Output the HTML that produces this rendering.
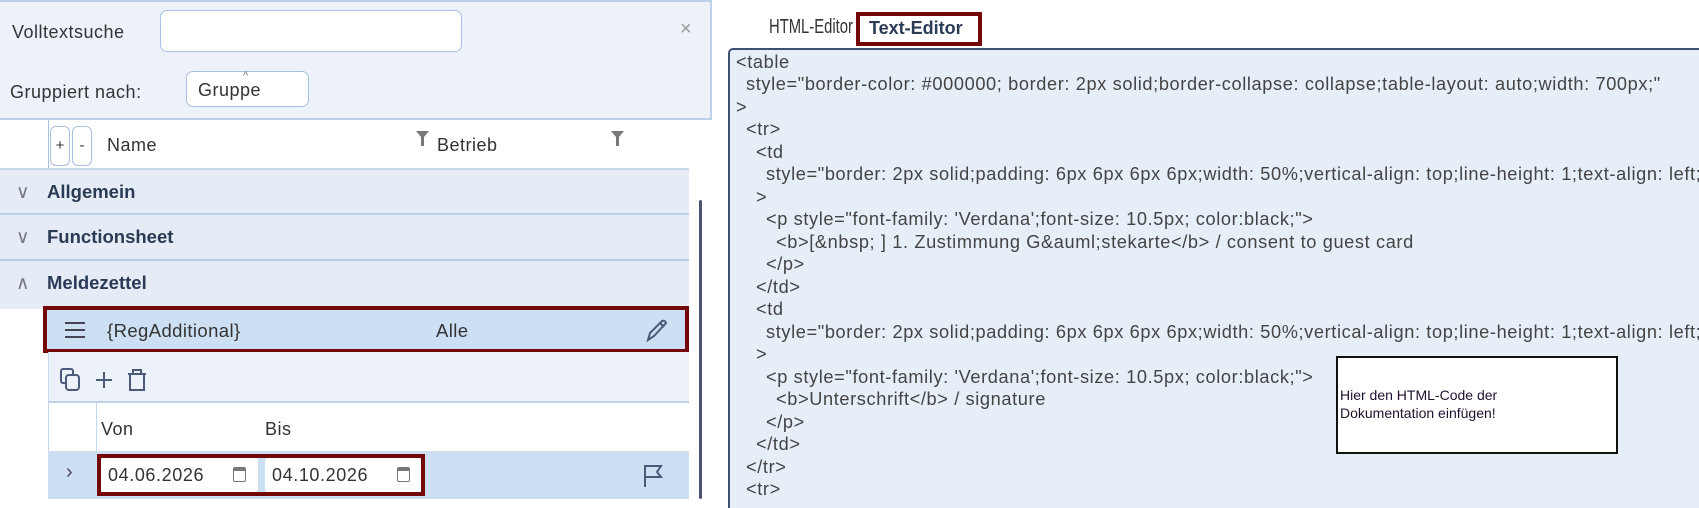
<!DOCTYPE html>
<html><head><meta charset="utf-8"><style>
*{box-sizing:border-box;margin:0;padding:0}
body{width:1699px;height:499px;overflow:hidden;background:#fff;font-family:"Liberation Sans",sans-serif;position:relative;color:#2b3a55}
.abs{position:absolute}
.top{left:0;top:0;width:712px;height:120px;background:#edf2fa;border-right:2px solid #bcd0ea;border-bottom:2px solid #bcd0ea;border-top:2px solid #bcd0ea}
.lbl{font-size:18px;color:#333;letter-spacing:0.5px}
.inp{background:#fff;border:1px solid #aac0e0;border-radius:7px}
.grp{left:0;width:689px;background:#e6ecf5;border-bottom:2px solid #b9cde6;font-weight:bold;font-size:18.5px;color:#2b3a55}
.grp span{position:absolute;left:47px}
.grp i{position:absolute;left:16px;font-style:normal;color:#778;font-weight:normal}
.code{left:728px;top:48px;width:980px;height:460px;background:#e6eef8;border:2px solid #3c5070;border-right:none;border-bottom:none;border-top-left-radius:5px}
.ln{position:absolute;font-size:18.2px;color:#444;white-space:pre;letter-spacing:0.62px}
</style></head><body>
<div class="abs top"></div>
<div class="abs lbl" style="left:12px;top:22px">Volltextsuche</div>
<div class="abs inp" style="left:160px;top:10px;width:302px;height:42px"></div>
<div class="abs" style="left:680px;top:18px;font-size:20px;color:#999">×</div>
<div class="abs lbl" style="left:10px;top:82px">Gruppiert nach:</div>
<div class="abs inp" style="left:186px;top:71px;width:123px;height:36px"></div>
<div class="abs lbl" style="left:198px;top:80px">Gruppe</div>
<div class="abs" style="left:243px;top:70px;font-size:11px;color:#777">^</div>
<!-- header -->
<div class="abs" style="left:48px;top:120px;width:1px;height:50px;background:#aac0e0"></div>
<div class="abs inp" style="left:50px;top:126px;width:20px;height:40px;border-radius:6px;font-size:15px;text-align:center;line-height:38px;color:#333">+</div>
<div class="abs inp" style="left:72px;top:126px;width:20px;height:40px;border-radius:6px;font-size:15px;text-align:center;line-height:38px;color:#333">-</div>
<div class="abs lbl" style="left:107px;top:135px">Name</div>
<svg class="abs" style="left:416px;top:131px" width="14" height="16" viewBox="0 0 14 16"><path d="M0 0 H13 L8 6 V15 H5 V6 Z" fill="#777"/></svg>
<div class="abs lbl" style="left:437px;top:135px">Betrieb</div>
<svg class="abs" style="left:611px;top:131px" width="14" height="16" viewBox="0 0 14 16"><path d="M0 0 H13 L8 6 V15 H5 V6 Z" fill="#777"/></svg>
<div class="abs" style="left:0;top:168px;width:689px;height:2px;background:#c8d8ec"></div>
<div class="abs grp" style="top:170px;height:45px;line-height:43px"><i>∨</i><span>Allgemein</span></div>
<div class="abs grp" style="top:215px;height:46px;line-height:44px"><i>∨</i><span>Functionsheet</span></div>
<div class="abs grp" style="top:261px;height:48px;line-height:44px;border:none"><i>∧</i><span>Meldezettel</span></div>
<!-- selected row -->
<div class="abs" style="left:43px;top:306px;width:646px;height:47px;background:#cddff3;border:4px solid #740808"></div>
<div class="abs" style="left:65px;top:322px;width:20px;height:2px;background:#445;box-shadow:0 7px 0 #445,0 14px 0 #445"></div>
<div class="abs" style="left:107px;top:320px;font-size:18.5px;color:#333;letter-spacing:0.4px">{RegAdditional}</div>
<div class="abs" style="left:436px;top:320px;font-size:18.5px;color:#333;letter-spacing:0.4px">Alle</div>
<svg class="abs" style="left:644px;top:318px" width="26" height="26" viewBox="0 0 26 26"><path d="M4 22 L6 15 L18 3 Q21 2 22 5 L10 18 Z M16 5 L20 9" fill="none" stroke="#4a5a78" stroke-width="2"/></svg>
<!-- toolbar -->
<div class="abs" style="left:48px;top:352px;width:641px;height:51px;background:#edf2fa;border-left:1px solid #c8d8ec;border-bottom:2px solid #bcd0ea"></div>
<svg class="abs" style="left:60px;top:367px" width="90" height="28" viewBox="0 0 90 28"><rect x="1" y="2" width="12" height="14" rx="2" fill="none" stroke="#4a5a78" stroke-width="2"/><rect x="6" y="8" width="13" height="15" rx="3" fill="#edf2fa" stroke="#4a5a78" stroke-width="2"/><path d="M44 5 V21 M36 13 H52" stroke="#4a5a78" stroke-width="2"/><path d="M68 7 H86 M73 7 V3 H81 V7 M70 8 V23 H84 V8" fill="none" stroke="#4a5a78" stroke-width="2"/></svg>
<!-- von bis -->
<div class="abs" style="left:48px;top:403px;width:641px;height:48px;border-left:1px solid #c8d8ec"></div>
<div class="abs" style="left:96px;top:403px;width:1px;height:96px;background:#c8d8ec"></div>
<div class="abs lbl" style="left:101px;top:419px">Von</div>
<div class="abs lbl" style="left:265px;top:419px">Bis</div>
<div class="abs" style="left:48px;top:451px;width:641px;height:48px;background:#cddff3"></div>
<div class="abs" style="left:66px;top:461px;font-size:20px;color:#445">›</div>
<div class="abs" style="left:97px;top:454px;width:328px;height:42px;border:4px solid #740808;background:#cddff3"></div>
<div class="abs" style="left:101px;top:458px;width:157px;height:34px;background:#fff;border-radius:3px"></div>
<div class="abs" style="left:265px;top:458px;width:156px;height:34px;background:#fff;border-radius:3px"></div>
<div class="abs" style="left:108px;top:465px;font-size:18px;color:#333;letter-spacing:0.6px">04.06.2026</div>
<div class="abs" style="left:272px;top:465px;font-size:18px;color:#333;letter-spacing:0.6px">04.10.2026</div>
<div class="abs" style="left:233px;top:467px;width:13px;height:15px;border:1.5px solid #777;border-radius:2px;border-top-width:4px"></div>
<div class="abs" style="left:397px;top:467px;width:13px;height:15px;border:1.5px solid #777;border-radius:2px;border-top-width:4px"></div>
<svg class="abs" style="left:642px;top:463px" width="24" height="26" viewBox="0 0 24 26"><path d="M3 24 V3 H19 L15 9 L19 14 H3" fill="none" stroke="#4a5a78" stroke-width="2"/></svg>
<div class="abs" style="left:699px;top:200px;width:3px;height:299px;background:#4a5670;border-radius:2px"></div>
<!-- right -->
<div class="abs" style="left:769px;top:16px;font-size:20px;color:#333;transform:scaleX(0.74);transform-origin:left;white-space:nowrap">HTML-Editor</div>
<div class="abs" style="left:856px;top:12px;width:126px;height:34px;border:4px solid #740808"></div>
<div class="abs" style="left:869px;top:18px;font-size:18px;font-weight:bold;color:#2b3a55">Text-Editor</div>
<div class="abs code"></div>
<div class="ln" style="left:736px;top:52px">&lt;table</div>
<div class="ln" style="left:746px;top:74px">style="border-color: #000000; border: 2px solid;border-collapse: collapse;table-layout: auto;width: 700px;"</div>
<div class="ln" style="left:736px;top:97px">&gt;</div>
<div class="ln" style="left:746px;top:119px">&lt;tr&gt;</div>
<div class="ln" style="left:756px;top:142px">&lt;td</div>
<div class="ln" style="left:766px;top:164px">style="border: 2px solid;padding: 6px 6px 6px 6px;width: 50%;vertical-align: top;line-height: 1;text-align: left;"</div>
<div class="ln" style="left:756px;top:187px">&gt;</div>
<div class="ln" style="left:766px;top:209px">&lt;p style="font-family: 'Verdana';font-size: 10.5px; color:black;"&gt;</div>
<div class="ln" style="left:776px;top:232px">&lt;b&gt;[&amp;nbsp; ] 1. Zustimmung G&amp;auml;stekarte&lt;/b&gt; / consent to guest card</div>
<div class="ln" style="left:766px;top:254px">&lt;/p&gt;</div>
<div class="ln" style="left:756px;top:277px">&lt;/td&gt;</div>
<div class="ln" style="left:756px;top:299px">&lt;td</div>
<div class="ln" style="left:766px;top:322px">style="border: 2px solid;padding: 6px 6px 6px 6px;width: 50%;vertical-align: top;line-height: 1;text-align: left;"</div>
<div class="ln" style="left:756px;top:344px">&gt;</div>
<div class="ln" style="left:766px;top:367px">&lt;p style="font-family: 'Verdana';font-size: 10.5px; color:black;"&gt;</div>
<div class="ln" style="left:776px;top:389px">&lt;b&gt;Unterschrift&lt;/b&gt; / signature</div>
<div class="ln" style="left:766px;top:412px">&lt;/p&gt;</div>
<div class="ln" style="left:756px;top:434px">&lt;/td&gt;</div>
<div class="ln" style="left:746px;top:457px">&lt;/tr&gt;</div>
<div class="ln" style="left:746px;top:479px">&lt;tr&gt;</div>
<div class="abs" style="left:1336px;top:356px;width:282px;height:98px;background:#fff;border:2px solid #111"></div>
<div class="abs" style="left:1340px;top:386px;font-size:14px;line-height:18px;color:#201030">Hier den HTML-Code der<br>Dokumentation einfügen!</div>
</body></html>
